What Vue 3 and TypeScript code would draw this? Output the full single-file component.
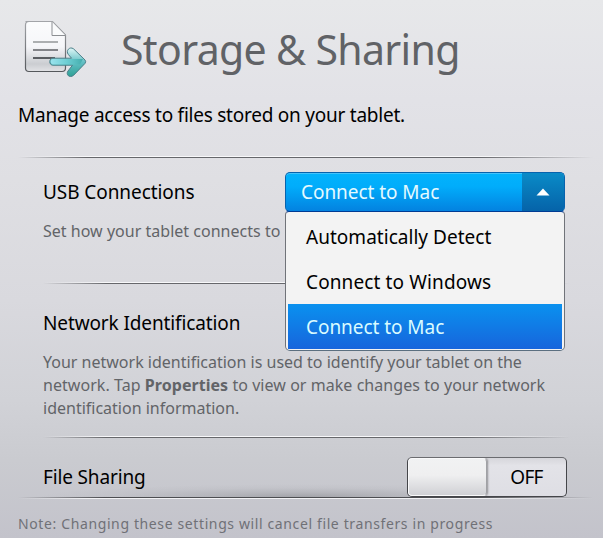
<script setup lang="ts">
import { ref } from 'vue'

const options: string[] = ['Automatically Detect', 'Connect to Windows', 'Connect to Mac']
const selected = ref<string>('Connect to Mac')
const open = ref<boolean>(true)
const sharing = ref<boolean>(false)

function choose(option: string): void {
  selected.value = option
  open.value = false
}
</script>

<template>
  <main class="page">
    <header class="header">
      <svg class="icon" width="72" height="64" viewBox="0 0 72 64">
        <defs>
          <linearGradient id="paper" x1="0" y1="0" x2="0" y2="1">
            <stop offset="0" stop-color="#fbfcfd" />
            <stop offset="0.5" stop-color="#f6f6f9" />
            <stop offset="0.85" stop-color="#cbcdd1" />
            <stop offset="1" stop-color="#e2e3e6" />
          </linearGradient>
          <linearGradient id="edge" x1="0" y1="0" x2="0" y2="1">
            <stop offset="0" stop-color="#a2a4a8" />
            <stop offset="1" stop-color="#55585c" />
          </linearGradient>
          <linearGradient id="head" x1="0" y1="0" x2="0" y2="1">
            <stop offset="0" stop-color="#e0f7f7" />
            <stop offset="0.5" stop-color="#62bfc4" />
            <stop offset="1" stop-color="#2fa196" />
          </linearGradient>
          <linearGradient id="shaft" gradientUnits="userSpaceOnUse" x1="35" y1="0" x2="70" y2="0">
            <stop offset="0" stop-color="#9ce4ee" />
            <stop offset="0.5" stop-color="#6ccdd2" />
            <stop offset="1" stop-color="#3fa9a8" />
          </linearGradient>
        </defs>
        <path d="M10.500 6.500H37.500L50.500 20V53Q50.500 56.500 47 56.500H14Q10.500 56.500 10.500 53V10Q10.500 6.500 14 6.500Z" fill="url(#paper)" stroke="url(#edge)" stroke-width="1.200" />
        <path d="M37 7V20.500H50.500Z" fill="#fafbfc" />
        <path d="M37 7V20.500H50.500" fill="none" stroke="#8c8f93" />
        <path d="M18 27H43" stroke="#a4a6a9" stroke-width="1.800" />
        <path d="M18 35H43" stroke="#76787c" stroke-width="1.800" />
        <path d="M18 43H40" stroke="#4d5054" stroke-width="1.800" />
        <path d="M38 43.200H56.500L53.200 39.300C50.600 35.900 54.500 31 58.500 33.800L70 45Q71.400 46.700 70 48.400L58.500 60.400C54.500 63.500 50.500 59.500 53 56L57.500 50.200H38C33.700 50.200 33.700 43.200 38 43.200Z" fill="url(#head)" stroke="#4b7f89" />
        <path d="M38 44H68L65 49.400H38C35 49.400 35 44 38 44Z" fill="url(#shaft)" />
      </svg>
      <h1 class="title">Storage &amp; Sharing</h1>
    </header>

    <p class="intro">Manage access to files stored on your tablet.</p>
    <div class="rule wide"></div>

    <section class="row usb">
      <div class="copy">
        <h2 class="label">USB Connections</h2>
        <p class="hint connects">Set how your tablet connects to</p>
      </div>
      <div class="dropdown">
        <button class="picker" type="button" @click="open = !open">
          <span class="value">{{ selected }}</span>
          <span class="arrow">
            <svg width="14" height="8" viewBox="0 0 14 8"><path d="M0.500 7.500L7 0.500L13.500 7.500Z" fill="#fff" /></svg>
          </span>
        </button>
        <ul v-if="open" class="menu">
          <li
            v-for="option in options"
            :key="option"
            class="option"
            :class="{ active: option === selected }"
            @click="choose(option)"
          >{{ option }}</li>
        </ul>
      </div>
    </section>
    <div class="rule"></div>

    <section class="network">
      <h2 class="label ident">Network Identification</h2>
      <p class="hint">
        Your network identification is used to identify your tablet on the<br />
        <span class="second">network. Tap <b>Properties</b> to view or make changes to your network</span><br />
        identification information.
      </p>
    </section>
    <div class="rule"></div>

    <section class="row files">
      <h2 class="label file">File Sharing</h2>
      <button class="toggle" :class="{ on: sharing }" type="button" @click="sharing = !sharing">
        <span class="knob"></span>
        <span class="state">{{ sharing ? 'ON' : 'OFF' }}</span>
      </button>
    </section>
    <div class="rule wide dark"></div>

    <footer class="note">Note: Changing these settings will cancel file transfers in progress</footer>
  </main>
</template>

<style>
body {
  margin: 0;
  overflow: hidden;
}
</style>

<style scoped>
.page {
  box-sizing: border-box;
  width: 603px;
  height: 538px;
  display: flex;
  flex-direction: column;
  overflow: hidden;
  background: linear-gradient(#e7e8ea 0, #e2e2e7 100px, #dfdfe3 180px, #d9d9de 300px, #d1d2d7 400px, #cacbd0 460px, #c3c3cb 538px);
  font-family: 'Noto Sans', 'Open Sans', sans-serif;
  font-size: 19px;
  line-height: 24px;
  color: #000;
  white-space: nowrap;
}
h1, h2, p, ul {
  margin: 0;
  padding: 0;
  font-weight: 400;
}
button {
  padding: 0;
  font: inherit;
  text-align: left;
}
.header {
  display: flex;
  height: 103px;
  box-sizing: border-box;
  padding: 15px 0 0 15px;
}
.icon {
  flex: none;
}
.title {
  margin: 6px 0 0 34px;
  font-size: 41px;
  line-height: 56px;
  letter-spacing: -0.65px;
  color: #606266;
}
.intro {
  height: 53px;
  padding-left: 18px;
  letter-spacing: -0.24px;
}
.rule {
  flex: none;
  height: 2px;
  margin: 0 33px 0 43px;
  background:
    linear-gradient(90deg, transparent, #f8f8fa 12%, #f8f8fa 80%, transparent) 0 0 / 100% 1px no-repeat,
    linear-gradient(90deg, transparent, #66676b 12%, #66676b 80%, transparent) 0 1px / 100% 1px no-repeat;
}
.rule.wide {
  margin: 0 10px 0 18px;
}
.rule.dark {
  background:
    linear-gradient(90deg, transparent, #4c4d51 15%, #4c4d51 80%, transparent) 0 0 / 100% 1px no-repeat,
    linear-gradient(90deg, transparent, #f1f1f4 12%, #f1f1f4 80%, transparent) 0 1px / 100% 1px no-repeat;
}
.row {
  display: flex;
  justify-content: space-between;
}
.label {
  font-size: 19px;
  line-height: 24px;
}
.hint {
  font-size: 16px;
  line-height: 23px;
  color: #626468;
}
.usb {
  height: 124px;
  box-sizing: border-box;
  padding: 14px 38px 0 43px;
}
.usb .label {
  margin-top: 8px;
  letter-spacing: -0.07px;
}
.connects {
  margin-top: 16px;
  letter-spacing: 0.02px;
}
.dropdown {
  position: relative;
  width: 280px;
  height: 40px;
}
.picker {
  display: flex;
  justify-content: space-between;
  box-sizing: border-box;
  width: 280px;
  height: 40px;
  overflow: hidden;
  border: 1px solid #0763ad;
  border-bottom-color: #003b93;
  border-radius: 5px;
  background: linear-gradient(#02b3fc, #01adfb 35%, #0382e0);
  box-shadow: inset 0 1px 0 #43c3fb;
  color: #e4faff;
}
.value {
  padding: 7px 0 0 15px;
  letter-spacing: -0.05px;
}
.arrow {
  display: flex;
  align-items: center;
  justify-content: center;
  width: 42px;
  height: 38px;
  background: linear-gradient(#0a8bc7, #0563a9);
}
.menu {
  position: absolute;
  z-index: 2;
  top: 39px;
  left: 0;
  box-sizing: border-box;
  width: 280px;
  height: 140px;
  padding: 2px 2px 1px;
  border: 1px solid #707379;
  border-top-color: #003b93;
  border-bottom-color: #5b6f80;
  border-radius: 4px 4px 5px 5px;
  background: #f3f3f3;
  list-style: none;
}
.option {
  height: 45px;
  padding-left: 18px;
  line-height: 47px;
  letter-spacing: 0.03px;
}
.option:nth-child(2) {
  letter-spacing: 0.12px;
}
.option.active {
  background: linear-gradient(#0a91ef, #1765dc);
  color: #d9fbff;
  letter-spacing: -0.05px;
}
.network {
  height: 152px;
  box-sizing: border-box;
  padding: 27px 0 0 43px;
}
.ident {
  letter-spacing: -0.12px;
}
.network .hint {
  margin-top: 16px;
}
.second {
  letter-spacing: 0.05px;
}
.files {
  height: 59px;
  box-sizing: border-box;
  padding: 19px 36px 0 43px;
  background:
    radial-gradient(ellipse 265px 13px at 50% 100%, rgba(60, 62, 65, 0.26), rgba(60, 62, 65, 0.13) 35%, rgba(60, 62, 65, 0.035) 70%, transparent);
}
.file {
  margin-top: 8px;
  letter-spacing: -0.15px;
}
.toggle {
  display: flex;
  box-sizing: border-box;
  width: 160px;
  height: 40px;
  border: 1px solid #45464a;
  border-top-color: #6b6c70;
  border-radius: 5px;
  overflow: hidden;
  background: linear-gradient(#d6d6db, #e3e3e8 20%, #dedee4);
  color: #000;
}
.knob {
  box-sizing: border-box;
  width: 79px;
  height: 38px;
  border: 1px solid #f9f9fa;
  border-right-color: #a0a1a5;
  border-radius: 4px;
  background: linear-gradient(#f1f2f3, #efeff0 45%, #d0d1d5);
  box-shadow: 1px 0 2px rgba(0, 0, 0, 0.35);
}
.state {
  flex: 1;
  padding-top: 7px;
  text-align: center;
  letter-spacing: -0.7px;
}
.toggle.on {
  flex-direction: row-reverse;
}
.note {
  padding: 15px 0 0 18px;
  font-size: 14px;
  line-height: 20px;
  letter-spacing: 0.62px;
  color: #707177;
}
</style>
